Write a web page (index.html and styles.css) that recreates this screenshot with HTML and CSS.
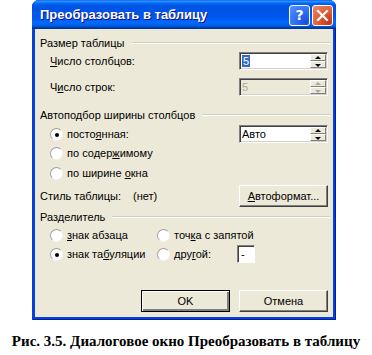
FILE: index.html
```html
<!DOCTYPE html>
<html lang="ru">
<head>
    <meta charset="UTF-8">
    <title>Преобразовать в таблицу</title>
    <link rel="stylesheet" href="styles.css">
</head>
<body>
<div class="page">
    <div class="window">
        <div class="titlebar">
            <span class="title">Преобразовать в таблицу</span>
            <div class="tb-buttons">
                <span class="tb-btn help">?</span>
                <span class="tb-btn close">
                    <svg width="13" height="13" viewBox="0 0 13 13"><path d="M2 2 L11 11 M11 2 L2 11" stroke="#fff" stroke-width="2.2" stroke-linecap="square"/></svg>
                </span>
            </div>
        </div>

        <div class="dialog">
            <div class="group-head first">Размер таблицы</div>
            <div class="row spin-row r-cols">
                <span class="indent"><u>Ч</u>исло столбцов:</span>
                <div class="spin">
                    <span class="spin-value"><span class="selected">5</span></span>
                    <span class="spin-btns"><span class="up"></span><span class="down"></span></span>
                </div>
            </div>
            <div class="row spin-row r-rows">
                <span class="indent">Ч<u>и</u>сло строк:</span>
                <div class="spin disabled">
                    <span class="spin-value">5</span>
                    <span class="spin-btns"><span class="up"></span><span class="down"></span></span>
                </div>
            </div>

            <div class="group-head g-auto">Автоподбор ширины столбцов</div>
            <div class="row spin-row r-fixed">
                <span class="radio-item indent"><span class="radio checked"></span><span>посто<u>я</u>нная:</span></span>
                <div class="spin">
                    <span class="spin-value">Авто</span>
                    <span class="spin-btns"><span class="up"></span><span class="down"></span></span>
                </div>
            </div>
            <div class="row r-content">
                <span class="radio-item indent"><span class="radio"></span><span>по содер<u>ж</u>имому</span></span>
            </div>
            <div class="row r-window">
                <span class="radio-item indent"><span class="radio"></span><span>по ширине <u>о</u>кна</span></span>
            </div>

            <div class="row r-style">
                <span class="style-label">Стиль таблицы:<span class="style-value">(нет)</span></span>
                <span class="button"><span><u>А</u>втоформат...</span></span>
            </div>

            <div class="group-head g-sep">Разделитель</div>
            <div class="sep-grid">
                <span class="radio-item"><span class="radio"></span><span><u>з</u>нак абзаца</span></span>
                <span class="radio-item"><span class="radio"></span><span>точ<u>к</u>а с запятой</span></span>
                <span class="radio-item"><span class="radio checked"></span><span>знак та<u>б</u>уляции</span></span>
                <span class="radio-item other"><span class="radio"></span><span>дру<u>г</u>ой:</span><span class="char-box">-</span></span>
            </div>

            <div class="actions">
                <span class="button default">OK</span>
                <span class="button">Отмена</span>
            </div>
        </div>
    </div>

    <p class="caption">Рис. 3.5. Диалоговое окно Преобразовать в таблицу</p>
</div>
</body>
</html>
```

FILE: styles.css
```css
body {
    margin: 0;
    background-color: #fff;
    font-family: "Liberation Sans", Arial, sans-serif;
    font-size: 11px;
    color: #000;
}
.page {
    width: 372px;
}
u {
    text-decoration-thickness: 1px;
    text-underline-offset: 1px;
}

/* Window frame */
.window {
    margin-left: 32px;
    width: 304px;
    height: 320px;
    box-sizing: border-box;
    background-color: #0842dc;
    border-radius: 7px 7px 0 0;
    display: flex;
    flex-direction: column;
    overflow: hidden;
    box-shadow: inset -1px 0 0 #001ea0, inset 1px 0 0 #0a3fcf, inset 0 -1px 0 #001ea0;
}
.titlebar {
    height: 29px;
    flex-shrink: 0;
    display: flex;
    align-items: center;
    justify-content: space-between;
    padding: 0 3px 0 8px;
    background: linear-gradient(to bottom, #0058ee 0%, #3593ff 4%, #288eff 6%, #127dff 8%, #036ffc 10%, #0262ee 14%, #0057e5 20%, #0054e3 24%, #0055eb 56%, #005bf5 66%, #026afe 76%, #0062ef 86%, #0052d6 92%, #0040ab 94%, #003092 100%);
}
.title {
    color: #fff;
    font-weight: bold;
    font-size: 13px;
    text-shadow: 1px 1px 0 #0f1089;
}
.tb-buttons {
    display: flex;
    gap: 2px;
    margin-top: 1px;
}
.tb-btn {
    width: 21px;
    height: 21px;
    box-sizing: border-box;
    border: 1px solid #fff;
    border-radius: 3px;
    display: flex;
    align-items: center;
    justify-content: center;
    color: #fff;
    font-family: "DejaVu Sans", sans-serif;
    font-weight: bold;
    font-size: 14px;
}
.tb-btn.help {
    background: radial-gradient(circle at 85% 85%, #1a4ce0 0%, #2d6df3 45%, #5a93ff 100%);
}
.tb-btn.close {
    background: radial-gradient(circle at 85% 85%, #c13a16 0%, #e05a34 45%, #ee8a6a 100%);
}

/* Dialog body */
.dialog {
    flex: 1;
    margin: 0 3px 3px;
    background-color: #ece9d8;
    padding: 0 5px 0 5px;
    display: flex;
    flex-direction: column;
}
.group-head {
    height: 14px;
    display: flex;
    align-items: center;
}
.group-head::after {
    content: "";
    flex: 1;
    margin-left: 7px;
    margin-right: -2px;
    border-top: 1px solid #d0d0bf;
    border-bottom: 1px solid #fff;
}
.group-head.first { margin-top: 7px; }
.g-auto { margin-top: 12px; }
.g-sep { margin-top: 3px; }

.row {
    display: flex;
    align-items: center;
    justify-content: space-between;
    height: 14px;
}
.spin-row { height: 18px; }
.indent { margin-left: 10px; }
.r-cols { margin-top: 2px; }
.r-rows { margin-top: 8px; }
.r-fixed { margin-top: 3px; }
.r-content { margin-top: 3px; }
.r-window { margin-top: 6px; }
.r-style { margin-top: 5px; height: 22px; }

/* Spinners */
.spin {
    width: 89px;
    height: 18px;
    box-sizing: border-box;
    display: flex;
    background-color: #fff;
    border: 1px solid;
    border-color: #808080 #fff #fff #808080;
    box-shadow: inset 1px 1px 0 #404040, inset -1px -1px 0 #d4d0c8;
    padding: 1px;
}
.spin-value {
    flex: 1;
    padding-left: 1px;
    line-height: 14px;
}
.selected {
    background-color: #316ac5;
    color: #fff;
    padding: 0 1px;
}
.spin.disabled {
    background-color: #ece9d8;
    color: #aca899;
}
.spin-btns {
    width: 16px;
    display: flex;
    flex-direction: column;
}
.spin-btns span {
    flex: 1;
    background-color: #ece9d8;
    border: 1px solid;
    border-color: #fff #808080 #808080 #fff;
    position: relative;
}
.spin-btns span::after {
    content: "";
    position: absolute;
    left: 4px;
    border-left: 3px solid transparent;
    border-right: 3px solid transparent;
}
.spin-btns .up::after {
    top: 1px;
    border-bottom: 3px solid #000;
}
.spin-btns .down::after {
    top: 2px;
    border-top: 3px solid #000;
}
.spin.disabled .spin-btns .up::after { border-bottom-color: #aca899; }
.spin.disabled .spin-btns .down::after { border-top-color: #aca899; }

/* Radios */
.radio-item {
    display: flex;
    align-items: center;
    white-space: nowrap;
}
.radio {
    width: 11px;
    height: 11px;
    border-radius: 50%;
    background-color: #fff;
    border: 1px solid;
    border-color: #a0a0a0 #f4f4f4 #f4f4f4 #a0a0a0;
    margin-right: 4px;
    position: relative;
    flex-shrink: 0;
}
.radio.checked::after {
    content: "";
    position: absolute;
    left: 4px;
    top: 4px;
    width: 4px;
    height: 4px;
    border-radius: 50%;
    background-color: #000;
}

.style-label {
    display: flex;
}
.style-value {
    margin-left: 12px;
}

/* Separator group */
.sep-grid {
    display: grid;
    grid-template-columns: 107px auto;
    grid-template-rows: 14px 18px;
    row-gap: 3px;
    margin-top: 4px;
    margin-left: 10px;
    align-items: center;
}
.char-box {
    width: 18px;
    height: 18px;
    box-sizing: border-box;
    margin-left: 26px;
    background-color: #fff;
    border: 1px solid;
    border-color: #808080 #fff #fff #808080;
    box-shadow: inset 1px 1px 0 #404040;
    padding: 1px 0 0 3px;
    line-height: 14px;
}

/* Buttons */
.button {
    width: 89px;
    height: 22px;
    box-sizing: border-box;
    display: flex;
    align-items: center;
    justify-content: center;
    background-color: #ece9d8;
    border: 1px solid;
    border-color: #fff #404040 #404040 #fff;
    box-shadow: inset -1px -1px 0 #808080;
}
.button.default {
    border: 1px solid #000;
    box-shadow: inset 1px 1px 0 #fff, inset -2px -2px 0 #808080;
}
.actions {
    display: flex;
    justify-content: flex-end;
    gap: 9px;
    margin-top: auto;
    margin-bottom: 5px;
}

.caption {
    margin: 12px 0 0;
    text-align: center;
    font-family: "Liberation Serif", "Times New Roman", serif;
    font-weight: bold;
    font-size: 15px;
    line-height: 18px;
    white-space: nowrap;
}
```
